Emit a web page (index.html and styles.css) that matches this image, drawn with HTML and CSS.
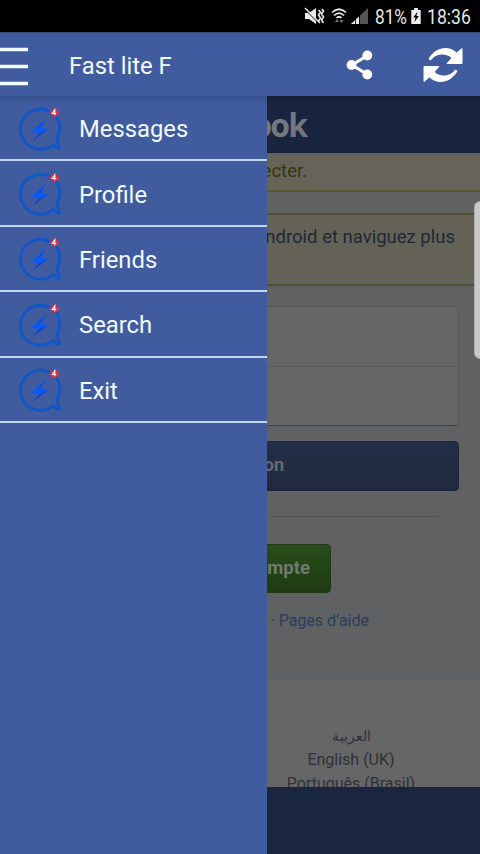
FILE: index.html
```
<!DOCTYPE html>
<html lang="fr">
<head>
<meta charset="utf-8">
<title>Fast lite F</title>
<link rel="stylesheet" href="styles.css">
</head>
<body>
<svg class="defs" aria-hidden="true">
  <symbol id="bubble" viewBox="0 0 46 46">
    <path d="M36.500 38.300A20 20 0 1 1 42.800 18.500Q43.500 26 40 32.500L42.500 42Q40 43 36.500 38.300Z" fill="none" stroke="#1257c5" stroke-width="3" stroke-linejoin="round"/>
    <path d="M29 12.500L14 25.500 21.500 27.500 16 34.500 31.500 23 24.500 21.500Z" fill="#0a5af5"/>
    <path d="M29 12.500L20 23 24 20ZM21.500 27.500L16 34.500 31.500 23Z" fill="#1d43b5"/>
    <path d="M37.500 2.500L42.500 6.500 37.500 11 32.500 6.500Z" fill="#d72f48" stroke="#d72f48" stroke-linejoin="round"/>
    <path d="M37.800 9.200V3.800L35.300 7.500H39.300" fill="none" stroke="#fff" stroke-width="1.100"/>
  </symbol>
</svg>
<div class="screen">
  <header class="status">
    <svg class="status-icons" viewBox="0 0 68 20">
      <g fill="#e8e8e8">
        <path d="M2 7H6L13 2V18L6 13H2Z"/>
        <path d="M15.500 4l2 2-2 3 2 3-2 3 1 2M19 3l1.500 2-2 3 2 3-2 3 2 3" fill="none" stroke="#e8e8e8" stroke-width="1.600"/>
        <path d="M2 3L16 17" stroke="#000" stroke-width="1.400"/>
        <path d="M2 2L17 17" stroke="#e8e8e8" stroke-width="1.500"/>
        <path d="M29 6.500Q36 0 43 6.500M31 9.500Q36 4.500 41 9.500M33.500 12Q36 9.500 38.500 12" fill="none" stroke="#e8e8e8" stroke-width="1.700"/>
        <path d="M32 16l2-3 2 3zM36.500 14h4l-2 3z" fill="#777"/>
        <path d="M48 18L65 2V18Z" fill="#555"/>
        <path d="M48 18L56 10.500V18Z"/>
        <path d="M52.500 11v8M56.500 8v11" stroke="#000" stroke-width=".8"/>
      </g>
    </svg>
    <span class="pct">81%</span>
    <svg class="battery" viewBox="0 0 10 17"><path d="M3 0H7V2H10V17H0V2H3Z" fill="#eee"/><path d="M6.500 4L2 10H4.500L3.500 15 8 8.500H5.500Z" fill="#000"/></svg>
    <span class="clock">18:36</span>
  </header>
  <nav class="appbar">
    <svg class="burger" viewBox="0 0 28 40"><path d="M0 3.500H28M0 20.500H28M0 37.500H28" stroke="#f4fbff" stroke-width="3.500"/></svg>
    <h1>Fast lite F</h1>
    <svg class="share" viewBox="0 0 28 30"><path d="M21.500 5.500L6 15 21.500 24.500" fill="none" stroke="#fff" stroke-width="3.200"/><g fill="#fff"><circle cx="21.300" cy="5.500" r="4.900"/><circle cx="5.500" cy="15" r="4.900"/><circle cx="21.300" cy="24.500" r="4.900"/></g></svg>
    <svg class="refresh" viewBox="0 0 40 34"><g fill="#fff"><path id="arrow" d="M6 11C12-.5 26-2.500 33.500 5L39 .5V15.500H24L29 10C23 4 13 4.500 7.500 12Z" stroke="#fff" stroke-linejoin="round"/><use href="#arrow" transform="rotate(180 20 17)"/></g></svg>
  </nav>
  <main class="content">
    <div class="page">
      <div class="brand">book</div>
      <div class="notice">connecter.</div>
      <div class="promo">Android et naviguez plus</div>
      <div class="fields"><div></div><div></div></div>
      <div class="login">Connexion</div>
      <div class="rule"></div>
      <div class="create">compte</div>
      <div class="help">· Pages d’aide</div>
      <div class="languages"><span lang="ar">العربية</span><span>English (UK)</span><span>Português (Brasil)</span></div>
      <div class="banner"></div>
    </div>
    <div class="scroll"></div>
    <ul class="drawer">
      <li><svg><use href="#bubble"/></svg><span>Messages</span></li>
      <li><svg><use href="#bubble"/></svg><span>Profile</span></li>
      <li><svg><use href="#bubble"/></svg><span>Friends</span></li>
      <li><svg><use href="#bubble"/></svg><span>Search</span></li>
      <li><svg><use href="#bubble"/></svg><span>Exit</span></li>
    </ul>
  </main>
</div>
</body>
</html>
```
FILE: styles.css
```
* { box-sizing: border-box; }
body { margin: 0; font-family: Roboto, "Noto Sans", sans-serif; background: #000; }
.defs { position: absolute; width: 0; height: 0; }
.screen { width: 480px; height: 854px; overflow: hidden; display: flex; flex-direction: column; }

.status { height: 32px; flex: none; display: flex; align-items: center; padding-left: 303px; background: #000; color: #e8e8e8; font-size: 20px; white-space: nowrap; }
.status-icons { width: 68px; height: 20px; flex: none; margin-right: 4px; }
.status span { transform-origin: left; flex: none; line-height: 32px; padding-top: 2px; }
.pct { width: 36px; transform: scaleX(.86); }
.battery { width: 10px; height: 16px; flex: none; margin-right: 6px; }
.clock { transform: scaleX(.88); }

.appbar { height: 64px; flex: none; display: flex; align-items: center; background: #405c9f; border-top: 1px solid #354b80; color: #f4fbff; }
.burger { width: 28px; height: 40px; margin-right: 41px; margin-top: 2px; }
.appbar h1 { margin: 2px 0 0; width: 277px; font-size: 23.8px; font-weight: 400; line-height: 30px; }
.share { width: 28px; height: 30px; margin-right: 49px; }
.refresh { width: 40px; height: 34px; }

.content { position: relative; flex: 1; min-height: 0; overflow: hidden; }
.page { height: 758px; background: #5f6163; display: flex; flex-direction: column; align-items: flex-end; }
.page > * { flex: none; white-space: nowrap; text-align: right; }
.brand { width: 100%; height: 57px; padding-right: 174px; background: linear-gradient(#141e37, #19243f 8px); color: #74777f; font: 700 32px/58px "Open Sans", sans-serif; letter-spacing: -2px; }
.notice { width: 100%; height: 39px; padding-right: 173px; background: #666359; border-top: 2px solid #5c5d5c; border-bottom: 2px solid #58562f; color: #36360e; font-size: 18.5px; line-height: 33px; }
.promo { width: 100%; height: 73px; margin-top: 21px; padding-right: 25px; background: #646256; border-top: 2px solid #504f32; border-bottom: 2px solid #504f32; color: #1f2737; font-size: 18.5px; line-height: 44px; }
.fields { width: 438px; height: 120px; margin: 20px 21px 0 0; background: #666; border: 1px solid #545658; border-bottom-color: #404244; border-radius: 5px; }
.fields div { height: 59px; }
.fields div + div { border-top: 1px solid #5b5c5d; }
.login { width: 438px; height: 50px; margin: 15px 21px 0 0; padding-right: 174px; border: 1px solid #1d273c; border-radius: 4px; background: linear-gradient(#222f48, #20283c); color: #66696f; font-size: 18px; font-weight: 700; line-height: 46px; }
.rule { width: 167px; height: 1px; margin: 25px 42px 1px 0; background: #505254; }
.create { width: 180px; height: 49px; margin: 26px 149px 0 0; padding-right: 20px; border: 1px solid #233917; border-radius: 4px; background: linear-gradient(#294d1b, #1d3b12); color: #717a6d; font-size: 18.5px; font-weight: 700; line-height: 46px; }
.help { margin: 15px 111px 0 0; font-size: 16px; line-height: 26px; color: #2b3c5c; }
.languages { width: 100%; height: 107px; margin-top: 46px; padding: 43px 18px 0 240px; display: flex; flex-direction: column; align-items: center; overflow: hidden; background: #666; color: #2d3139; font-size: 16px; line-height: 24px; }
.languages span { flex: none; position: relative; top: 1px; }
.languages span:first-child { font-size: 14px; }
.banner { width: 100%; flex: 1; background: #1a2540; }

.scroll { position: absolute; right: -8px; top: 105px; width: 14px; height: 158px; border-radius: 6px; background: #c9c9c9; border: 1px solid #aaa; }
.drawer { position: absolute; left: 0; top: 0; width: 267px; height: 758px; margin: 0; padding: 0; list-style: none; background: linear-gradient(#38528f, #405c9f 8px); color: #f1faff; }
.drawer li { height: 65.4px; display: flex; align-items: center; padding-left: 17px; border-bottom: 2px solid #c3d5f4; font-size: 23.8px; }
.drawer svg { width: 46px; height: 46px; margin: 2px 16px 0 0; }
.drawer span { padding-top: 3px; }
```
